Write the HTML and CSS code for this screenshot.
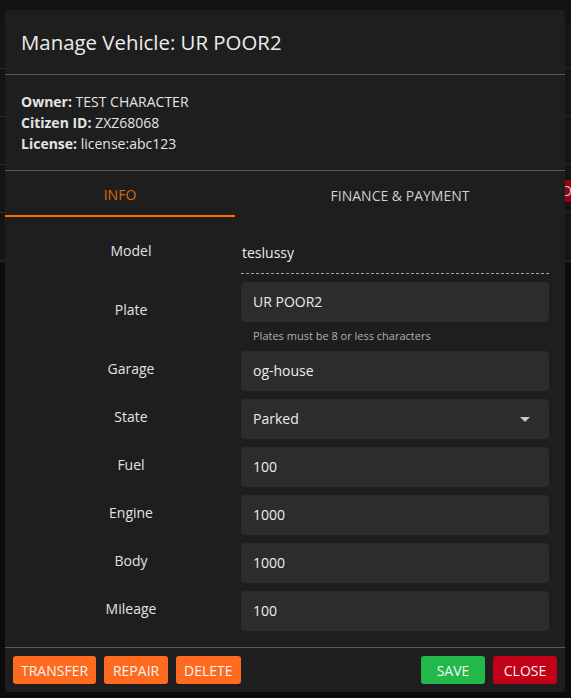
FILE: index.html
```html
<!DOCTYPE html>
<html>
<head>
<meta charset="utf-8">
<link rel="stylesheet" href="styles.css">
</head>
<body>
<div class="page">
  <div class="bg-table">
    <div class="bg-head"></div>
    <div class="bg-row"></div>
    <div class="bg-row"></div>
    <div class="bg-row"></div>
    <div class="bg-row"><span class="bg-btn">D</span></div>
    <div class="bg-row"></div>
  </div>

  <div class="modal">
    <div class="modal-header">Manage Vehicle: UR POOR2</div>
    <div class="info">
      <div><b>Owner:</b> TEST CHARACTER</div>
      <div><b>Citizen ID:</b> ZXZ68068</div>
      <div><b>License:</b> license:abc123</div>
    </div>
    <div class="tabs">
      <div class="tab tab-info active">INFO</div>
      <div class="tab tab-finance">FINANCE &amp; PAYMENT</div>
    </div>
    <div class="form">
      <div class="label">Model</div>
      <div class="static">teslussy</div>

      <div class="label">Plate</div>
      <div class="field">
        <div class="input">UR POOR2</div>
        <div class="helper">Plates must be 8 or less characters</div>
      </div>

      <div class="label">Garage</div>
      <div class="input">og-house</div>

      <div class="label">State</div>
      <div class="input select">Parked<span class="caret"></span></div>

      <div class="label">Fuel</div>
      <div class="input">100</div>

      <div class="label">Engine</div>
      <div class="input">1000</div>

      <div class="label">Body</div>
      <div class="input">1000</div>

      <div class="label">Mileage</div>
      <div class="input">100</div>
    </div>
    <div class="footer">
      <div class="btn-group">
        <button class="btn btn-orange">TRANSFER</button>
        <button class="btn btn-orange">REPAIR</button>
        <button class="btn btn-orange">DELETE</button>
      </div>
      <div class="btn-group">
        <button class="btn btn-green">SAVE</button>
        <button class="btn btn-red">CLOSE</button>
      </div>
    </div>
  </div>
</div>
</body>
</html>
```

FILE: styles.css
```css
* { box-sizing: border-box; }

html, body {
  margin: 0;
  padding: 0;
  width: 571px;
  height: 698px;
  overflow: hidden;
  background: #0c0c0c;
  font-family: "Open Sans", "Noto Sans", sans-serif;
}

.page {
  position: relative;
  width: 571px;
  height: 698px;
}

.bg-table {
  height: 263px;
  background: #151515;
}

.bg-head {
  height: 21px;
  background: #131313;
}

.bg-row {
  height: 48px;
  border-bottom: 1px solid #2b2b2b;
  display: flex;
  justify-content: flex-end;
  align-items: center;
}

.bg-btn {
  display: inline-block;
  width: 18px;
  height: 22px;
  margin-top: 4px;
  margin-right: -8px;
  background: #9a0013;
  color: #c9c9c9;
  font-size: 14px;
  line-height: 22px;
  padding-left: 1px;
}

.modal {
  position: absolute;
  top: 10px;
  left: 5px;
  width: 560px;
  height: 682px;
  background: #1e1e1e;
  border-radius: 4px;
  color: #e6e6e6;
  display: flex;
  flex-direction: column;
}

.modal-header {
  padding: 16px;
  font-size: 20.4px;
  line-height: 32px;
  color: #ececec;
  border-bottom: 1px solid #5a5a5a;
}

.info {
  padding: 16px;
  font-size: 14px;
  line-height: 21px;
  color: #e4e4e4;
  border-bottom: 1px solid #5a5a5a;
}

.info b {
  font-weight: 700;
}

.tabs {
  display: flex;
  height: 48px;
}

.tab {
  display: flex;
  align-items: center;
  justify-content: center;
  font-size: 14px;
  color: #cfcfcf;
  padding-top: 2px;
}

.tab-info {
  width: 230px;
  color: #d86a12;
  border-bottom: 2px solid #ff6d00;
  padding-top: 3px;
}

.tab-finance {
  flex: 1;
}

.form {
  display: grid;
  grid-template-columns: 220px 1fr;
  row-gap: 8px;
  padding: 16px;
  flex: 1;
  align-content: start;
  border-bottom: 1px solid #5a5a5a;
}

.label {
  align-self: center;
  text-align: center;
  font-size: 14px;
  color: #e2e2e2;
  padding-bottom: 6px;
}

.static {
  height: 41px;
  border-bottom: 1px dashed #a8a8a8;
  font-size: 14px;
  line-height: 40px;
  padding-left: 1px;
  color: #ececec;
}

.input {
  height: 40px;
  background: #2c2c2c;
  border-radius: 4px;
  padding: 0 12px;
  font-size: 14px;
  line-height: 40px;
  color: #ececec;
}

.select {
  display: flex;
  align-items: center;
  justify-content: space-between;
}

.caret {
  width: 0;
  height: 0;
  border-left: 5px solid transparent;
  border-right: 5px solid transparent;
  border-top: 5px solid #c8c8c8;
  margin-right: 7px;
  margin-top: 1px;
}

.helper {
  margin-top: 6px;
  padding-left: 12px;
  font-size: 11px;
  line-height: 15px;
  color: #b0b0b0;
}

.footer {
  display: flex;
  justify-content: space-between;
  padding: 8px;
}

.btn-group {
  display: flex;
  gap: 8px;
}

.btn {
  height: 28px;
  min-width: 64px;
  padding: 0 8px;
  border: none;
  border-radius: 3px;
  font-family: "Open Sans", "Noto Sans", sans-serif;
  font-size: 14px;
  color: #f4f4f4;
  cursor: pointer;
}

.btn-orange { background: #ff6a1f; }
.btn-green { background: #22b94a; }
.btn-red { background: #c20018; }
```
